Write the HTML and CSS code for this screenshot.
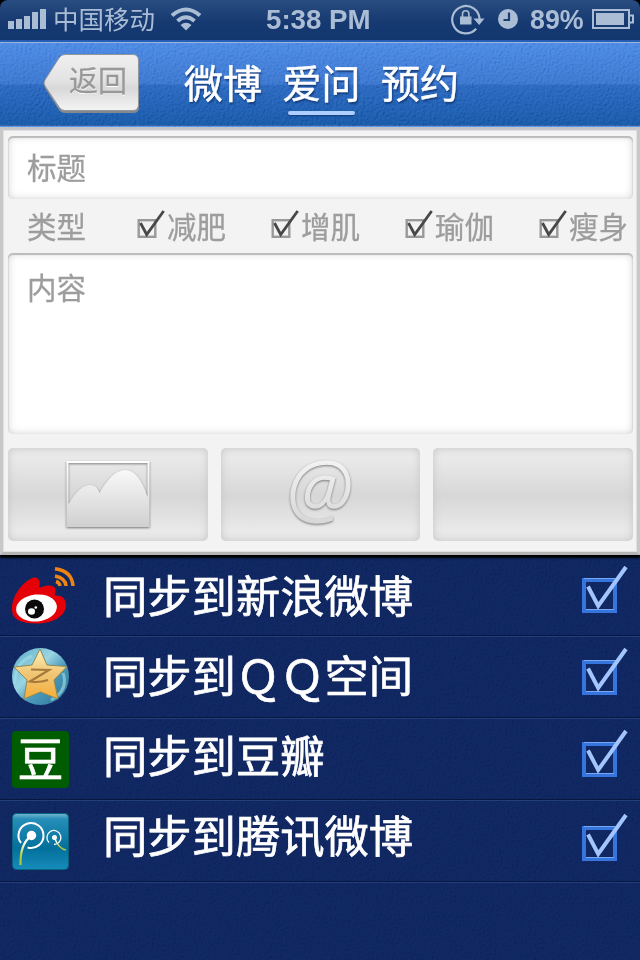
FILE: index.html
```html
<!DOCTYPE html>
<html lang="zh-CN">
<head>
<meta charset="utf-8">
<title>爱问</title>
<link rel="stylesheet" href="styles.css">
</head>
<body>
<svg class="defs" width="0" height="0">
  <defs>
    <filter id="leather" x="0" y="0" width="100%" height="100%">
      <feTurbulence type="fractalNoise" baseFrequency="0.45" numOctaves="2" seed="4" result="n"/>
      <feDiffuseLighting in="n" surfaceScale="1.8" diffuseConstant="0.8" lighting-color="#fff"><feDistantLight azimuth="225" elevation="45"/></feDiffuseLighting>
    </filter>
    <linearGradient id="metal" x1="0" y1="0" x2="0" y2="1"><stop offset="0" stop-color="#fff"/><stop offset="1" stop-color="#d0d0d0"/></linearGradient>
    <symbol id="tick" viewBox="0 0 28 30">
      <rect x="1.700" y="10.200" width="16.600" height="16.600" fill="none" stroke="#999" stroke-width="2.400"/>
      <path d="M3.500 13L9.700 24.500L26.700 1" fill="none" stroke="#484848" stroke-width="2.800"/>
    </symbol>
    <symbol id="bigtick" viewBox="0 0 46 50">
      <rect x="2" y="15" width="31" height="31" fill="none" stroke="#3674de" stroke-width="4"/>
      <path d="M2 13.500H33M4 44.500H32" stroke="#78a8f4" stroke-width="1.200"/>
      <path d="M6 21.500L16.200 41L44 2" fill="none" stroke="#a3c5ff" stroke-width="4"/>
    </symbol>
  </defs>
</svg>
<div class="screen">
  <header class="status">
    <svg class="signal" width="39" height="21" viewBox="0 0 39 21"><path d="M0 13h6v8H0zM8 11h6v10H8zM16 8h6v13h-6zM24 4h6v17h-6zM32 1h6v20h-6z"/></svg>
    <span class="carrier">中国移动</span>
    <svg class="wifi" width="32" height="24" viewBox="0 0 32 24"><path d="M2 8.500Q16-3.500 30 8.500M7.500 14Q16 6.500 24.500 14" fill="none" stroke="#abbdd5" stroke-width="4"/><path d="M10.500 18Q16 13.500 21.500 18L16 23.500z"/></svg>
    <span class="time">5:38 PM</span>
    <svg class="lock" width="36" height="32" viewBox="0 0 36 32"><path d="M26.200 25.800A13.700 13.700 0 1 1 29.600 16" fill="none" stroke="#abbdd5" stroke-width="2.200"/><path d="M23.500 15.500H34.500L29.200 22zM10 13.500h11.500v8h-11.500z"/><path d="M12.500 14V11a3.200 3.200 0 0 1 6.400 0v3" fill="none" stroke="#abbdd5" stroke-width="1.600"/></svg>
    <svg class="clock" width="20" height="20" viewBox="0 0 20 20"><circle cx="10" cy="10" r="10"/><path d="M11 3.500V11H5.500" fill="none" stroke="#1a3d74" stroke-width="2.200"/></svg>
    <span class="percent">89%</span>
    <svg class="battery" width="43" height="20" viewBox="0 0 43 20"><path d="M1 1H37V6.500H41V13.500H37V19H1z" fill="none" stroke="#abbdd5" stroke-width="2"/><path d="M37 6v8" stroke="#abbdd5" stroke-width="2"/><path d="M4 4h28v12H4z"/></svg>
  </header>
  <nav class="nav">
    <svg class="texture" width="640" height="84"><rect width="640" height="84" filter="url(#leather)"/></svg>
    <a class="back">
      <svg class="back-shape" width="98" height="62" viewBox="0 0 98 62">
        <defs><linearGradient id="backfill" x1="0" y1="0" x2="0" y2="1"><stop offset="0" stop-color="#efeff0"/><stop offset=".45" stop-color="#e3e3e4"/><stop offset=".6" stop-color="#d8d8d9"/><stop offset="1" stop-color="#f4f4f4"/></linearGradient></defs>
        <path d="M22 3H90Q96 3 96 9V54Q96 60 90 60H22Q18 60 16 57L2 35Q1 32 2 29L16 6Q18 3 22 3Z" fill="#85898e"/>
        <path d="M22 1.500H90Q95.500 1.500 95.500 8V51Q95.500 57.500 90 57.500H22Q18 57.500 16 54L2 33Q0 30 2 27L16 5Q18 1.500 22 1.500Z" fill="url(#backfill)" stroke="#91969c" stroke-width="1"/>
      </svg>
      <span>返回</span>
    </a>
    <div class="tabs"><span>微博</span><span class="active">爱问</span><span>预约</span></div>
  </nav>
  <main class="panel">
    <div class="field title">标题</div>
    <div class="types">
      <span class="label">类型</span>
      <span class="type"><svg width="28" height="30"><use href="#tick"/></svg>减肥</span>
      <span class="type"><svg width="28" height="30"><use href="#tick"/></svg>增肌</span>
      <span class="type"><svg width="28" height="30"><use href="#tick"/></svg>瑜伽</span>
      <span class="type"><svg width="28" height="30"><use href="#tick"/></svg>瘦身</span>
    </div>
    <div class="field content">内容</div>
    <div class="tools">
      <div class="tool">
        <svg class="raised" width="83" height="66" viewBox="0 0 83 66"><path d="M.500 -1H83.500V65H.500zM2.500 1V42C10 29 17 23 24 23C29 23 32 26 33.500 31C40 19 49 8 59 8C71 8 78 23 81.500 35V1z" fill="url(#metal)" fill-rule="evenodd"/></svg>
      </div>
      <div class="tool"><svg class="raised" width="70" height="76" viewBox="0 0 70 76"><text class="at" x="31" y="54.500" text-anchor="middle" fill="url(#metal)" stroke="url(#metal)" stroke-width="1.300" transform="scale(1.080 1.080)">@</text></svg></div>
      <div class="tool"></div>
    </div>
  </main>
  <section class="sync">
    <svg class="texture faint" width="640" height="405"><rect width="640" height="405" filter="url(#leather)"/></svg>
    <div class="row first">
      <svg class="logo" width="65" height="60" viewBox="0 0 65 60">
        <path d="M0 43C-1 29 12 13 22 10.500C27 10 29 15 27 21C33 18 42 17 43.500 22C44 25 42 27 43 28.500C49 28 54 31 54 38C54 49 41 56.500 24 56.500C9 56.500 0 52 0 43Z" fill="#e50008"/>
        <ellipse cx="24.500" cy="41" rx="20.500" ry="13.500" fill="#fff" transform="rotate(-6 24.500 41)"/>
        <circle cx="22.500" cy="42" r="9.500" fill="#0a0a0a"/><ellipse cx="19.500" cy="44.500" rx="3.500" ry="3.200" fill="#fff"/><circle cx="23.800" cy="40.500" r="1.300" fill="#fff"/>
        <g fill="none" stroke="#ee8412" stroke-width="3.500"><path d="M43 1.800Q60 4 61 19M43 9Q53.500 11 54 19M44 14.500Q47.500 15.500 48 19"/></g>
      </svg>
      <span>同步到新浪微博</span><svg class="check" width="46" height="50"><use href="#bigtick"/></svg>
    </div>
    <div class="row second">
      <svg class="logo" width="57" height="57" viewBox="0 0 57 57">
        <defs><linearGradient id="sky" x1="0" y1="0" x2="1" y2="1"><stop offset="0" stop-color="#5aa9c6"/><stop offset=".4" stop-color="#9ad5e3"/><stop offset=".6" stop-color="#4c9abb"/><stop offset="1" stop-color="#2a7396"/></linearGradient>
        <linearGradient id="gold" x1="0" y1="0" x2="0" y2="1"><stop offset="0" stop-color="#fff0b5"/><stop offset=".5" stop-color="#efc675"/><stop offset="1" stop-color="#f6ad38"/></linearGradient></defs>
        <circle cx="28.500" cy="28.500" r="28.500" fill="url(#sky)"/>
        <path d="M3 36Q2 15 20 8M51 25Q57 42 39 52" fill="none" stroke="#a4dfea" stroke-width="3" opacity=".6"/>
        <path d="M28 1L35 17L55 18.500L42 32L46 51L28.500 44L12 51L15 32L2 19L20 17Z" fill="url(#gold)" stroke="#8a8a5a" stroke-width="1" stroke-linejoin="round"/>
        <path d="M19 21.500L37 22L18 33.500Q27 35 36 32" fill="none" stroke="#a5793a" stroke-width="2.200"/>
      </svg>
      <span>同步到ＱＱ空间</span><svg class="check" width="46" height="50"><use href="#bigtick"/></svg>
    </div>
    <div class="row third">
      <div class="logo douban">豆</div>
      <span>同步到豆瓣</span><svg class="check" width="46" height="50"><use href="#bigtick"/></svg>
    </div>
    <div class="row fourth">
      <svg class="logo" width="57" height="57" viewBox="0 0 57 57">
        <defs><linearGradient id="teal" x1="0" y1="0" x2="0" y2="1"><stop offset="0" stop-color="#75b8d1"/><stop offset=".1" stop-color="#258eb9"/><stop offset=".62" stop-color="#03709b"/><stop offset="1" stop-color="#168cbb"/></linearGradient>
        <linearGradient id="stem" x1="0" y1="0" x2="0" y2="1"><stop offset=".2" stop-color="#fff"/><stop offset=".7" stop-color="#adc936"/></linearGradient></defs>
        <rect x=".500" y=".500" width="56" height="56" rx="4" fill="url(#teal)" stroke="#0a637e"/>
        <g class="glow" fill="none" stroke="#fff"><path d="M9 30A12.500 12.500 0 1 1 15.500 34.500" stroke-width="2"/><path d="M37 29.500A7 7 0 1 1 42 31.500" stroke-width="1.300"/></g>
        <circle cx="19.500" cy="22.500" r="4.700" fill="#fff"/><circle cx="42.500" cy="24.500" r="2.500" fill="#fff"/>
        <path d="M19 23Q8 31 8.500 52" fill="none" stroke="url(#stem)" stroke-width="2.200"/><path d="M43 26Q47 36 54 37" fill="none" stroke="url(#stem)" stroke-width="1.500"/>
      </svg>
      <span>同步到腾讯微博</span><svg class="check" width="46" height="50"><use href="#bigtick"/></svg>
    </div>
  </section>
</div>
</body>
</html>
```
FILE: styles.css
```css
* { box-sizing: border-box; }
body { margin: 0; background: #000; font-family: "Liberation Sans", "Noto Sans CJK SC", sans-serif; }
.defs { position: absolute; }
.screen { width: 640px; height: 960px; overflow: hidden; display: flex; flex-direction: column; }
span { white-space: nowrap; }

.status { height: 43px; flex: none; display: flex; align-items: flex-start; background: linear-gradient(#294d80, #153970 55%, #12376e); border-bottom: 1px solid #9bb6df; box-shadow: inset 0 -2px #255eb4; color: #abbdd5; border-radius: 8px 8px 0 0; }
.status svg { fill: #abbdd5; flex: none; }
.signal { margin: 8px 0 0 8px; }
.carrier { width: 110px; margin-left: 6px; font-size: 25.5px; line-height: 41px; }
.wifi { margin: 7px 0 0 7px; }
.time { width: 108px; margin-left: 64px; font-size: 27.7px; line-height: 39px; font-weight: bold; }
.lock { margin: 3px 0 0 76px; }
.clock { margin: 9px 0 0 12px; }
.percent { width: 56px; margin-left: 12px; font-size: 26.8px; line-height: 40px; font-weight: bold; }
.battery { margin: 9px 0 0 6px; }

.nav { position: relative; height: 84px; flex: none; display: flex; background: linear-gradient(#4281e1, #326ecc 49%, #235fbb 51%, #124fa2); border-bottom: 1px solid #4b8cf0; box-shadow: inset 0 -1px #33588f; }
.texture { position: absolute; inset: 0; opacity: .4; mix-blend-mode: soft-light; }
.back { position: relative; width: 98px; height: 62px; margin: 10px 0 0 43px; }
.back-shape { position: absolute; inset: 0; }
.back span { position: relative; display: block; margin-left: 26px; font-size: 29px; line-height: 58px; color: #999; text-shadow: 0 1px #fff; -webkit-text-stroke: .3px; }
.tabs { position: relative; display: flex; gap: 20.5px; margin: 14px 0 0 43px; color: #fff; font-size: 39px; line-height: 56px; text-shadow: 1px 2px 2px #123a78; -webkit-text-stroke: .5px; }
.tabs span { height: 60px; width: 78px; }
.tabs .active { position: relative; }
.active::after { content: ""; position: absolute; left: 5px; top: 54px; width: 67px; height: 4px; border-radius: 2px; background: #b0ceff; box-shadow: 0 1px 2px #103b7c; }

.panel { position: relative; z-index: 1; height: 428px; flex: none; padding: 6px 4px 0 5px; background: #f3f3f3; border: 3px solid #c8c8c8; border-top-color: #c3c5c9; border-bottom-color: #b5b5b5; box-shadow: inset 0 0 0 1px #e0e0e0, 0 3px 2px #000; color: #9d9d9d; font-size: 29.5px; -webkit-text-stroke: .3px; }
.field { border-radius: 5px; background: #fff; padding-left: 19px; box-shadow: inset 0 2px 1px #bbb, inset 1px 0 1px #ddd, inset -1px 0 1px #ddd, inset 0 0 9px #d3d3d3; }
.title { height: 63px; line-height: 65px; }
.types { display: flex; height: 54px; padding-left: 19px; line-height: 58px; }
.label { width: 110px; flex: none; }
.type { width: 134px; flex: none; display: flex; gap: 2px; }
.type svg { margin-top: 11px; flex: none; }
.content { height: 181px; line-height: 71px; }
.tools { display: flex; gap: 13px; margin-top: 14px; }
.tool { flex: 1; height: 93px; display: flex; align-items: center; justify-content: center; border-radius: 5px; background: linear-gradient(#eaeaea 10%, #d7d7d7 52%, #e9e9e9 88%); box-shadow: inset 0 0 8px #c5c5c5; }
.raised { overflow: visible; filter: drop-shadow(0 1px 1px #777); }
.at { font: italic 300 72px "Open Sans", sans-serif; }

.sync { position: relative; flex: 1; background: #0e235d; color: #fff; }
.texture.faint { opacity: .15; }
.row { position: relative; height: 82px; display: flex; border-bottom: 1px solid #223e7b; box-shadow: inset 0 -1px #081742; font-size: 44.3px; -webkit-text-stroke: .7px; }
.row span { width: 478px; height: 80px; margin-left: 34px; line-height: 80px; }
.logo { flex: none; margin: 12px 0 0 12px; }
.first .logo { margin-right: -8px; }
.second .logo { margin-top: 11px; }
.check { flex: none; margin: 10px 0 0 1px; }
.fourth .check { margin-top: 12px; }
.first span { margin-top: 3px; }
.second span { margin-top: 1px; }
.third span { margin-top: -1px; }
.fourth span { margin-top: -3px; }
.douban { width: 57px; height: 57px; border-radius: 4px; background: #005c00; font-size: 46px; line-height: 58px; text-align: center; }
```
